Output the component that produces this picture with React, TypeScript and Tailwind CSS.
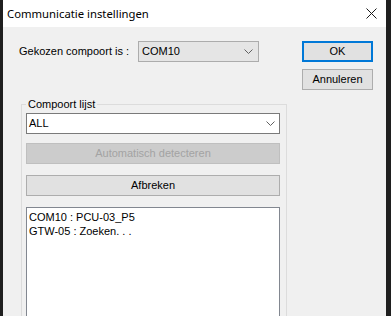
import { useState } from 'react';

function Chevron() {
  return (
    <svg width="9" height="5" viewBox="0 0 9 5" className="shrink-0">
      <path d="M0.5 0.5 L4.5 4.5 L8.5 0.5" fill="none" stroke="#606060" strokeWidth="1" />
    </svg>
  );
}

function CloseIcon() {
  return (
    <svg width="11" height="11" viewBox="0 0 11 11">
      <path d="M0.5 0.5 L10.5 10.5 M10.5 0.5 L0.5 10.5" fill="none" stroke="#1a1a1a" strokeWidth="1" />
    </svg>
  );
}

export default function App() {
  const [port] = useState('COM10');
  const [filter] = useState('ALL');
  const results = ['COM10 : PCU-03_P5', 'GTW-05 : Zoeken. . .'];

  return (
    <div className="w-[391px] h-[316px] overflow-hidden bg-[#1f1f1f] pl-[3px] pr-[5px] font-['Liberation_Sans',Arial,sans-serif] text-[11px] text-black">
      <div className="flex flex-col h-full bg-[#f0f0f0]">
        {/* Title bar */}
        <div className="flex items-center justify-between h-[27px] shrink-0 bg-white pl-[4px] pr-[9px]">
          <span className="font-['Noto_Sans',sans-serif] text-[11.3px] leading-none text-black">Communicatie instellingen</span>
          <CloseIcon />
        </div>

        {/* Body */}
        <div className="flex">
          <div className="flex flex-col w-[290px]">
            <div className="flex items-center h-[21px] mt-[14px]">
              <span className="ml-[16px] w-[119px] leading-none">Gekozen compoort is :</span>
              <div className="flex items-center justify-between w-[121px] h-[21px] bg-[#e5e5e5] border border-[#acacac] pl-[3px] pr-[5px]">
                <span className="leading-none">{port}</span>
                <Chevron />
              </div>
            </div>

            {/* Group box */}
            <fieldset className="ml-[18px] mt-[36px] w-[266px] h-[240px] border border-[#dcdcdc] pl-[4px] pr-[6px] pt-[2px]">
              <legend className="px-[2px] leading-[13px]">Compoort lijst</legend>
              <div className="flex items-center justify-between h-[21px] bg-white border border-[#7a7a7a] pl-[2px] pr-[4px]">
                <span className="leading-none">{filter}</span>
                <Chevron />
              </div>
              <div className="flex items-center justify-center h-[21px] mt-[9px] bg-[#cccccc] border border-[#bfbfbf] text-[#a3a3a3]">
                Automatisch detecteren
              </div>
              <div className="flex items-center justify-center h-[21px] mt-[11px] bg-[#e1e1e1] border border-[#adadad]">
                Afbreken
              </div>
              <div className="mt-[11px] h-[120px] bg-white border border-[#828790] pl-[2px] pt-[2px] leading-[14px]">
                {results.map((r) => (
                  <div key={r}>{r}</div>
                ))}
              </div>
            </fieldset>
          </div>

          {/* Buttons */}
          <div className="flex flex-col gap-[7px] ml-[9px] mt-[14px]">
            <button className="w-[71px] h-[21px] bg-[#e1e1e1] border-2 border-[#0078d7] leading-none">OK</button>
            <button className="w-[71px] h-[21px] bg-[#e1e1e1] border border-[#adadad] leading-none">Annuleren</button>
          </div>
        </div>
      </div>
    </div>
  );
}
